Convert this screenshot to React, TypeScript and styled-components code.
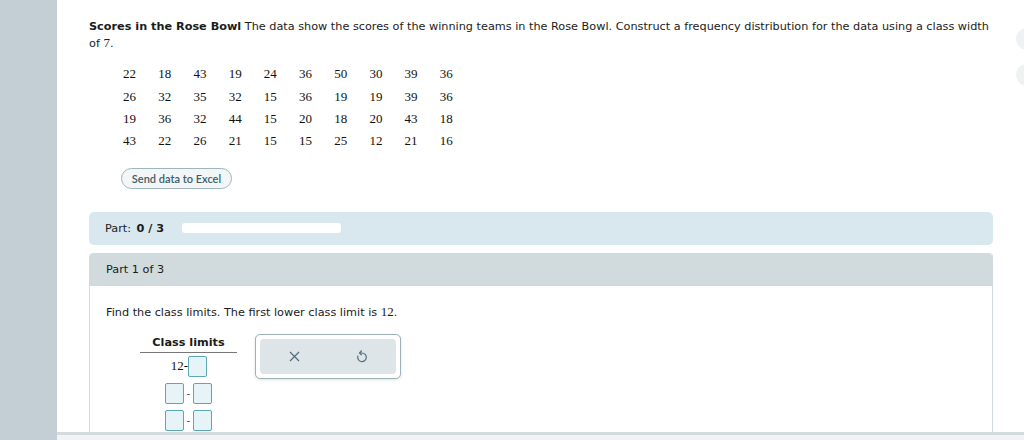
import React from 'react';
import styled, { createGlobalStyle } from 'styled-components';

const GlobalStyle = createGlobalStyle`
  html, body {
    margin: 0;
    padding: 0;
    background: #ffffff;
    font-family: "DejaVu Sans", Verdana, sans-serif;
    color: #1b1b1b;
  }
`;

const Page = styled.div`
  display: flex;
  width: 1024px;
  height: 440px;
  overflow: hidden;
  position: relative;
`;

const Sidebar = styled.div`
  width: 57px;
  flex-shrink: 0;
  background: #c3cfd4;
`;

const Main = styled.div`
  flex: 1;
  display: flex;
  flex-direction: column;
  min-width: 0;
`;

const Content = styled.div`
  flex: 1;
  overflow: hidden;
  padding: 18px 31px 0 32px;
`;

const Footer = styled.div`
  height: 5px;
  border-top: 3px solid #d3dbde;
  background: #f1f3f4;
`;

const Intro = styled.p`
  margin: 0;
  font-size: 11.25px;
  line-height: 17px;
  color: #1b1b1b;

  strong {
    font-weight: bold;
  }
`;

const Num = styled.span`
  font-family: "Liberation Serif", "Times New Roman", serif;
  font-size: 13px;
  line-height: 1;
`;

const DataGrid = styled.div`
  display: grid;
  grid-template-columns: repeat(10, 35.2px);
  grid-auto-rows: 22.4px;
  margin: 11px 0 0 23px;
  font-family: "Liberation Serif", "Times New Roman", serif;
  font-size: 13px;
  color: #111;
`;

const Cell = styled.div`
  display: flex;
  align-items: center;
  justify-content: center;
`;

const ExcelButton = styled.button`
  display: block;
  margin: 15px 0 0 32px;
  height: 21px;
  width: 111px;
  padding: 0;
  border: 1px solid #9fb5bd;
  border-radius: 11px;
  background: #f3f6f7;
  color: #3e5c69;
  font-family: Lato, "Open Sans", sans-serif;
  font-size: 11px;
  font-weight: 600;
  cursor: pointer;
`;

const PartBar = styled.div`
  display: flex;
  align-items: center;
  height: 33px;
  margin-top: 23px;
  padding-left: 16px;
  background: #d9e7ef;
  border-radius: 5px;
  font-size: 11.25px;
`;

const PartLabel = styled.span`
  strong {
    font-weight: bold;
    margin-left: 2px;
  }
`;

const Progress = styled.div`
  width: 159px;
  height: 10px;
  margin-left: 18px;
  background: #ffffff;
  border-radius: 3px;
`;

const Panel = styled.div`
  margin-top: 8px;
  border: 1px solid #d1dadd;
  border-top: none;
  border-radius: 4px 4px 0 0;
  height: 200px;
`;

const PanelHeader = styled.div`
  height: 33px;
  display: flex;
  align-items: center;
  padding-left: 16px;
  background: #d1dadd;
  border-radius: 4px 4px 0 0;
  font-size: 11.25px;
`;

const PanelBody = styled.div`
  padding: 18px 0 0 16px;
`;

const Prompt = styled.p`
  margin: 0;
  font-size: 11.25px;
  line-height: 17px;
`;

const AnswerRow = styled.div`
  display: flex;
  align-items: flex-start;
  margin-top: 14px;
`;

const LimitsTable = styled.div`
  margin-left: 34px;
  width: 97px;
  display: flex;
  flex-direction: column;
  align-items: center;
`;

const LimitsHead = styled.div`
  width: 100%;
  text-align: center;
  font-size: 11.25px;
  font-weight: bold;
  line-height: 14px;
  padding: 1px 0 2px;
  border-bottom: 1px solid #777;
`;

const LimitRow = styled.div<{ $shift?: number }>`
  display: flex;
  align-items: center;
  height: 27px;
  margin-left: ${p => p.$shift ?? 0}px;
  font-family: "Liberation Serif", "Times New Roman", serif;
  font-size: 13px;
  color: #111;
`;

const Dash = styled.span`
  font-size: 10px;
  margin: 0 3px;
  color: #333;
`;

const InputBox = styled.div`
  width: 17px;
  height: 19px;
  border: 1px solid #5aa8b4;
  border-radius: 2px;
  background: #e6f4f8;
`;

const ActionCard = styled.div`
  margin-left: 18px;
  margin-top: -1px;
  width: 136px;
  padding: 4px;
  border: 1px solid #9eb1b8;
  border-radius: 5px;
  background: #ffffff;
  box-shadow: 0 1px 3px rgba(0, 0, 0, 0.12);
`;

const ActionInner = styled.div`
  display: flex;
  justify-content: space-around;
  align-items: center;
  height: 35px;
  background: #dde5e8;
  border-radius: 4px;
`;

const IconButton = styled.button`
  border: none;
  background: transparent;
  padding: 0;
  width: 20px;
  height: 20px;
  display: flex;
  align-items: center;
  justify-content: center;
  color: #4e6d7a;
  cursor: pointer;
`;

const FloatDot = styled.div<{ $top: number }>`
  position: absolute;
  right: -14px;
  top: ${p => p.$top}px;
  width: 22px;
  height: 22px;
  border-radius: 50%;
  background: #eff2f3;
`;

const data = [
  [22, 18, 43, 19, 24, 36, 50, 30, 39, 36],
  [26, 32, 35, 32, 15, 36, 19, 19, 39, 36],
  [19, 36, 32, 44, 15, 20, 18, 20, 43, 18],
  [43, 22, 26, 21, 15, 15, 25, 12, 21, 16],
];

const App: React.FC = () => {
  return (
    <>
      <GlobalStyle />
      <Page>
        <Sidebar />
        <Main>
          <Content>
            <Intro>
              <strong>Scores in the Rose Bowl</strong> The data show the scores of the winning teams in the Rose Bowl.
              Construct a frequency distribution for the data using a class width of <Num>7</Num>.
            </Intro>

            <DataGrid>
              {data.flat().map((n, i) => (
                <Cell key={i}>{n}</Cell>
              ))}
            </DataGrid>

            <ExcelButton>Send data to Excel</ExcelButton>

            <PartBar>
              <PartLabel>
                Part: <strong>0 / 3</strong>
              </PartLabel>
              <Progress />
            </PartBar>

            <Panel>
              <PanelHeader>Part 1 of 3</PanelHeader>
              <PanelBody>
                <Prompt>
                  Find the class limits. The first lower class limit is <Num>12</Num>.
                </Prompt>
                <AnswerRow>
                  <LimitsTable>
                    <LimitsHead>Class limits</LimitsHead>
                    <LimitRow $shift={1}>
                      12-
                      <InputBox />
                    </LimitRow>
                    <LimitRow>
                      <InputBox />
                      <Dash>-</Dash>
                      <InputBox />
                    </LimitRow>
                    <LimitRow>
                      <InputBox />
                      <Dash>-</Dash>
                      <InputBox />
                    </LimitRow>
                  </LimitsTable>
                  <ActionCard>
                    <ActionInner>
                      <IconButton aria-label="clear">
                        <svg width="11" height="11" viewBox="0 0 11 11" fill="none" stroke="currentColor" strokeWidth="1.2">
                          <path d="M1 1 L10 10 M10 1 L1 10" />
                        </svg>
                      </IconButton>
                      <IconButton aria-label="undo">
                        <svg width="12" height="14" viewBox="0 0 12 14" fill="none" stroke="currentColor" strokeWidth="1.2" strokeLinecap="round" strokeLinejoin="round">
                          <path d="M4 4 H6 A4.3 4.3 0 1 1 1.9 7" />
                          <path d="M5.4 1.8 L3.6 4 L5.4 5.9" />
                        </svg>
                      </IconButton>
                    </ActionInner>
                  </ActionCard>
                </AnswerRow>
              </PanelBody>
            </Panel>
          </Content>
          <Footer />
        </Main>
        <FloatDot $top={28} />
        <FloatDot $top={64} />
      </Page>
    </>
  );
};

export default App;
